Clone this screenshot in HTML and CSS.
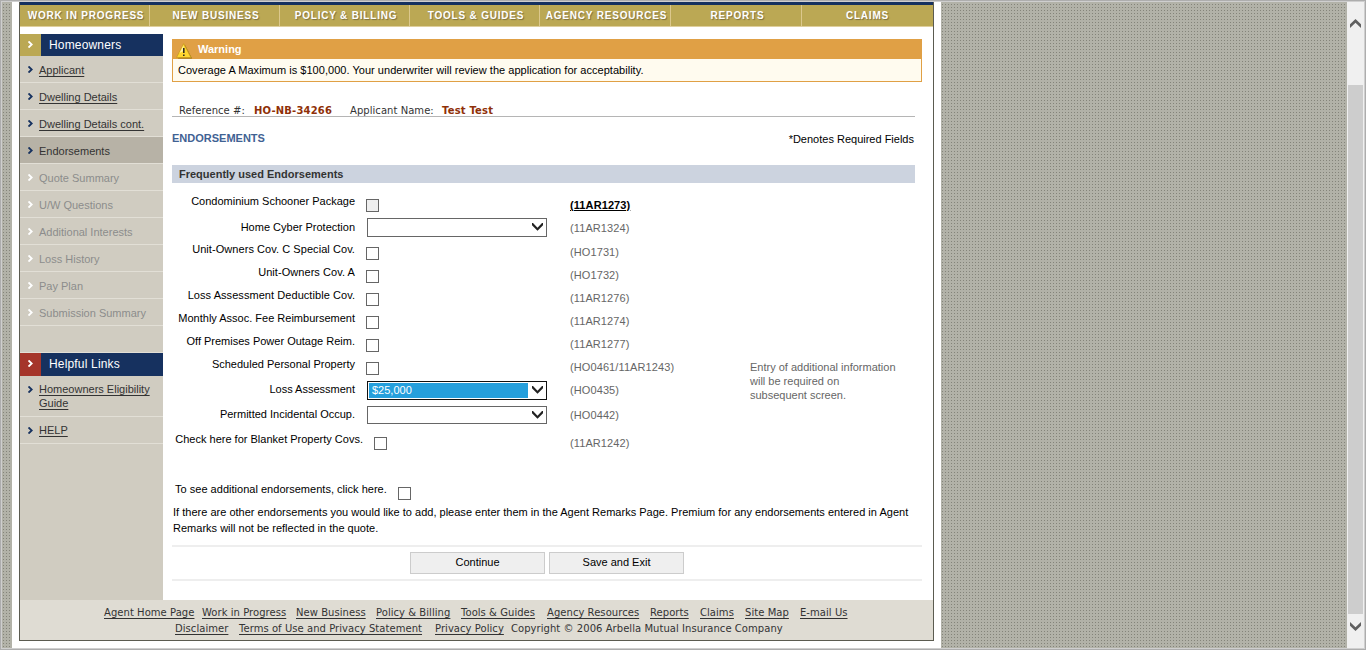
FILE: index.html
```html
<!DOCTYPE html>
<html lang="en">
<head>
<meta charset="utf-8">
<title>Homeowners - Endorsements</title>
<link rel="stylesheet" href="styles.css">
</head>
<body>
<svg class="defs" width="0" height="0">
  <symbol id="arrow" viewBox="0 0 5 7"><path d="M.5 .4L3.7 3.5L.5 6.6" fill="none" stroke="currentColor" stroke-width="1.8"/></symbol>
  <symbol id="drop" viewBox="0 0 11 8"><path d="M0 0H1L5.5 4.8L10 0H11V2.3L5.5 7.8L0 2.3Z" fill="currentColor"/></symbol>
  <symbol id="scroll" viewBox="0 0 11 9"><path d="M0 0L5.5 5.3L11 0V3.7L5.5 9L0 3.7Z" fill="currentColor"/></symbol>
</svg>
<div class="window">
  <div class="gutter"></div>
  <div class="sheet">
    <div class="page">
      <nav class="topnav">
        <a>WORK IN PROGRESS</a><a>NEW BUSINESS</a><a>POLICY &amp; BILLING</a><a>TOOLS &amp; GUIDES</a><a>AGENCY RESOURCES</a><a>REPORTS</a><a>CLAIMS</a>
      </nav>
      <div class="columns">
        <aside class="sidebar">
          <h2 class="side-head"><span class="tab"><svg><use href="#arrow"/></svg></span>Homeowners</h2>
          <ul class="side-list">
            <li><svg><use href="#arrow"/></svg><u>Applicant</u></li>
            <li><svg><use href="#arrow"/></svg><u>Dwelling Details</u></li>
            <li><svg><use href="#arrow"/></svg><u>Dwelling Details cont.</u></li>
            <li class="current"><svg><use href="#arrow"/></svg>Endorsements</li>
            <li class="off"><svg><use href="#arrow"/></svg>Quote Summary</li>
            <li class="off"><svg><use href="#arrow"/></svg>U/W Questions</li>
            <li class="off"><svg><use href="#arrow"/></svg>Additional Interests</li>
            <li class="off"><svg><use href="#arrow"/></svg>Loss History</li>
            <li class="off"><svg><use href="#arrow"/></svg>Pay Plan</li>
            <li class="off"><svg><use href="#arrow"/></svg>Submission Summary</li>
          </ul>
          <h2 class="side-head help"><span class="tab"><svg><use href="#arrow"/></svg></span>Helpful Links</h2>
          <ul class="side-list help-list">
            <li class="double"><svg><use href="#arrow"/></svg><u>Homeowners Eligibility<br>Guide</u></li>
            <li><svg><use href="#arrow"/></svg><u>HELP</u></li>
          </ul>
        </aside>
        <main class="main">
          <section class="warning">
            <h3><svg width="16" height="16" viewBox="0 0 16 16"><path d="M2 15.5H16L9 2Z" fill="#8a6914"/><path d="M7.7 .6L15 14.6H.5Z" fill="#ffd62e" stroke="#c89b1c" stroke-width=".8"/><path d="M7.5 2L3.5 10L7.5 8Z" fill="#fff2a0"/><path d="M7.8 5V10M7.8 11.4V13" stroke="#222" stroke-width="1.5"/></svg>Warning</h3>
            <p>Coverage A Maximum is $100,000. Your underwriter will review the application for acceptability.</p>
          </section>
          <div class="reference"><span>Reference #:</span><b>HO-NB-34266</b><span>Applicant Name:</span><b>Test Test</b></div>
          <div class="title"><h1>ENDORSEMENTS</h1><span>*Denotes Required Fields</span></div>
          <h4 class="band">Frequently used Endorsements</h4>
          <div class="row first"><label>Condominium Schooner Package</label><i class="box grey"></i><a class="code">(11AR1273)</a></div>
          <div class="row sel"><label>Home Cyber Protection</label><div class="select"><svg><use href="#drop"/></svg></div><span class="code">(11AR1324)</span></div>
          <div class="row open"><label>Unit-Owners Cov. C Special Cov.</label><i class="box"></i><span class="code">(HO1731)</span></div>
          <div class="row open"><label>Unit-Owners Cov. A</label><i class="box"></i><span class="code">(HO1732)</span></div>
          <div class="row open"><label>Loss Assessment Deductible Cov.</label><i class="box"></i><span class="code">(11AR1276)</span></div>
          <div class="row"><label>Monthly Assoc. Fee Reimbursement</label><i class="box"></i><span class="code">(11AR1274)</span></div>
          <div class="row"><label>Off Premises Power Outage Reim.</label><i class="box"></i><span class="code">(11AR1277)</span></div>
          <div class="row"><label>Scheduled Personal Property</label><i class="box"></i><span class="code">(HO0461/11AR1243)</span><p class="note">Entry of additional information<br>will be required on<br>subsequent screen.</p></div>
          <div class="row loss"><label>Loss Assessment</label><div class="select focus"><span>$25,000</span><svg><use href="#drop"/></svg></div><span class="code">(HO0435)</span></div>
          <div class="row occup"><label>Permitted Incidental Occup.</label><div class="select"><svg><use href="#drop"/></svg></div><span class="code">(HO0442)</span></div>
          <div class="row blanket"><label>Check here for Blanket Property Covs.</label><i class="box"></i><span class="code">(11AR1242)</span></div>
          <div class="more"><label>To see additional endorsements, click here.</label><i class="box"></i></div>
          <p class="remarks">If there are other endorsements you would like to add, please enter them in the Agent Remarks Page. Premium for any endorsements entered in Agent<br>Remarks will not be reflected in the quote.</p>
          <div class="actions"><button>Continue</button><button>Save and Exit</button></div>
        </main>
      </div>
      <footer class="footer">
        <div class="links"><u>Agent Home Page</u><u>Work in Progress</u><u>New Business</u><u>Policy &amp; Billing</u><u>Tools &amp; Guides</u><u>Agency Resources</u><u>Reports</u><u>Claims</u><u>Site Map</u><u>E-mail Us</u></div>
        <div class="legal"><u>Disclaimer</u><u>Terms of Use and Privacy Statement</u><u>Privacy Policy</u><span>Copyright © 2006 Arbella Mutual Insurance Company</span></div>
      </footer>
    </div>
  </div>
  <div class="backdrop"></div>
  <div class="scrollbar"><svg class="up"><use href="#scroll"/></svg><div class="thumb"></div><svg><use href="#scroll"/></svg></div>
</div>
</body>
</html>
```
FILE: styles.css
```css
* { box-sizing: border-box; margin: 0; padding: 0; }
body { height: 650px; overflow: hidden; background: #fff; font: 11px/16px "Liberation Sans", Arial, sans-serif; color: #000; }
.defs { display: block; position: absolute; }
h1, h2, h3, h4 { font-size: inherit; }
ul { list-style: none; }
svg { display: block; flex: none; }

.window { display: flex; height: 650px; border: 1px solid #adadad; box-shadow: inset 0 0 0 1px #cfcfcf; padding: 1px; }
.gutter, .backdrop { background: linear-gradient(90deg, transparent 0 1px, #b2b2a8 1px 3px) 1px 0 / 3px 3px, linear-gradient(#84847a 0 1px, #b2b2a8 1px 3px) 0 2px / 3px 3px; }
.gutter { width: 10px; }
.backdrop { width: 406px; }
.sheet { width: 929px; padding: 0 7px; background: #fff; }
.page { width: 915px; height: 639px; border: 1px solid #5b5b50; border-top: 0; }

.topnav { display: grid; grid-template-columns: repeat(4, 130px) repeat(3, 131px); height: 25px; border-top: 3px solid #16315f; border-bottom: 1px solid #dfcf9c; background: #bba854; }
.topnav a { border-right: 1px solid #dcc88c; text-align: center; font-weight: bold; font-size: 10px; line-height: 21px; letter-spacing: .8px; padding-left: 3px; color: #fff; text-shadow: 1px 1px 1px #7d7040; white-space: nowrap; }
.topnav a:last-child { border: 0; padding-left: 0; }

.columns { display: flex; height: 573px; }
.sidebar { width: 143px; margin-top: 7px; background: #d0ccc1; color: #333; }
.side-head { display: flex; gap: 8px; height: 22px; background: #16315f; color: #fff; font: 12px/22px "Liberation Sans", Arial, sans-serif; letter-spacing: .17px; }
.tab { width: 21px; padding: 7px 8px; background: #bba854; }
.help { height: 24px; margin-top: 26px; border-top: 1px solid #e2dfd6; line-height: 22px; }
.help .tab { background: #a5352a; }
.side-head svg, .side-list svg { width: 5px; height: 7px; }
.side-list li { display: flex; gap: 6px; height: 27px; padding: 7px 0 0 8px; border-bottom: 1px solid #e2dfd6; line-height: 15px; }
.side-list svg { color: #16315f; margin-top: 3px; }
.side-list u { text-underline-offset: 2px; }
.side-list .current { background: #b7b2a6; }
.side-list .off { color: #8c8c8c; }
.side-list .off svg { color: #fff; }
.help-list li { padding-top: 6px; }
.help-list svg { margin-top: 4px; }
.side-list .double { height: 41px; line-height: 14px; }

.main { width: 750px; margin: 12px 0 0 9px; }
.warning { height: 43px; border: 1px solid #e0a045; background: #fffbef; }
.warning h3 { display: flex; gap: 6px; height: 19px; padding-left: 3px; background: #e0a045; color: #fff; line-height: 19px; }
.warning h3 svg { margin-top: 3px; }
.warning p { padding-left: 5px; line-height: 23px; letter-spacing: .03px; white-space: nowrap; }
.reference { display: grid; grid-template-columns: 75px 96px 92px auto; width: 743px; height: 35px; padding: 21px 0 0 7px; border-bottom: 1px solid #b5b5b5; font: 10px/16px "DejaVu Sans", Verdana, sans-serif; letter-spacing: .05px; color: #333; }
.reference b { color: #8f3008; letter-spacing: .18px; }
.title { display: flex; justify-content: space-between; width: 742px; height: 48px; padding-top: 13px; }
.title h1 { color: #3f6293; }
.title span { padding-top: 1px; }
.band { width: 743px; height: 18px; padding-left: 7px; margin-bottom: 11px; background: #ccd3df; color: #333; line-height: 18px; }

.row { display: flex; align-items: flex-start; height: 23px; white-space: nowrap; }
.row label { width: 183px; margin-right: 11px; text-align: right; line-height: 14px; }
.open label { letter-spacing: .06px; }
.box { flex: none; width: 13px; height: 13px; margin: 5px 191px 0 0; border: 1px solid #666; background: #fff; }
.grey { background: #efefef; }
.code { width: 180px; padding-top: 2px; color: #666; letter-spacing: .1px; }
.note { color: #666; padding-top: 3px; line-height: 14px; }
.first { height: 22px; }
.first .code { padding-top: 3px; color: #000; font-weight: bold; text-decoration: underline; }
.sel { height: 26px; }
.sel label { padding-top: 3px; line-height: 16px; }
.sel .select { margin-top: 2px; }
.sel .code { padding-top: 4px; }
.select { display: flex; justify-content: flex-end; width: 180px; height: 19px; margin: 1px 23px 0 1px; padding: 4px 3px 0 1px; border: 1px solid #666; }
.select svg { width: 11px; height: 8px; color: #222; }
.focus { padding: 1px 3px 0 1px; border-color: #111; }
.focus span { width: 159px; height: 15px; margin-right: 4px; padding-left: 3px; background: #259fdc; color: #fff; line-height: 15px; }
.focus svg { margin-top: 3px; }
.loss { height: 25px; }
.row.loss label, .row.occup label { padding-top: 1px; line-height: 16px; }
.occup { height: 26px; }
.occup .select { height: 18px; }
.blanket { height: 50px; }
.row.blanket label { width: 191px; line-height: 16px; }
.blanket .box { margin: 6px 183px 0 0; }
.blanket .code { padding-top: 4px; }
.more { display: flex; height: 23px; padding-left: 3px; }
.more label { width: 223px; white-space: nowrap; letter-spacing: .02px; }
.more .box { margin-top: 6px; }
.remarks { height: 41px; padding-left: 1px; white-space: nowrap; letter-spacing: .01px; }
.actions { display: flex; justify-content: center; gap: 4px; height: 36px; padding: 5px 0 0; border: solid #eee; border-width: 2px 0; }
.actions button { width: 135px; height: 22px; border: 1px solid #ccc; background: #efefef; font: inherit; color: #000; padding-bottom: 2px; }

.footer { height: 40px; background: #dfdcd3; padding-top: 5px; font: 10px/16px "DejaVu Sans", Verdana, sans-serif; letter-spacing: .05px; color: #333; white-space: nowrap; }
.footer u { text-underline-offset: 2px; }
.links, .legal { display: grid; justify-items: start; }
.links { padding-left: 84px; grid-template-columns: 98px 94px 80px 85px 86px 103px 50px 45px 55px auto; }
.legal { padding-left: 155px; grid-template-columns: 64px 196px 76px auto; }

.scrollbar { display: flex; flex-direction: column; align-items: center; width: 17px; background: #f0f0f0; color: #606060; }
.scrollbar svg { width: 11px; height: 9px; margin-top: 8px; }
.scrollbar .up { transform: rotate(180deg); margin-top: 17px; }
.thumb { width: 15px; height: 529px; margin-top: 57px; background: #cdcdcd; }
```
